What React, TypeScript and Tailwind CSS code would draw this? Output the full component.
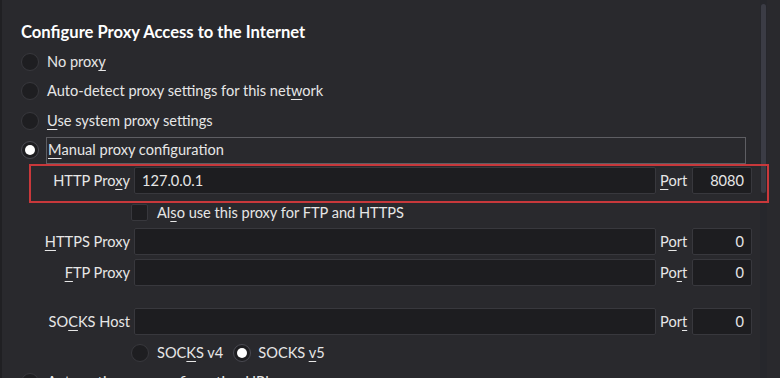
import React from "react";

const font = { fontFamily: "Lato, 'Noto Sans', sans-serif" };

function U({ children }: { children: React.ReactNode }) {
  return <span className="underline underline-offset-[3px] decoration-1">{children}</span>;
}

function Radio({ checked = false }: { checked?: boolean }) {
  return (
    <span
      className={`flex h-[18px] w-[18px] shrink-0 items-center justify-center rounded-full border bg-[#1e1e21] ${
        checked ? "border-[#4a4a52]" : "border-[#38383d]"
      }`}
    >
      {checked && <span className="h-[10px] w-[10px] rounded-full bg-white" />}
    </span>
  );
}

function RadioRow({ children, checked = false, focus = false }: { children: React.ReactNode; checked?: boolean; focus?: boolean }) {
  return (
    <div className="flex h-[29.5px] shrink-0 items-center">
      <Radio checked={checked} />
      {focus ? (
        <div className="ml-[7px] flex h-[27px] w-[700px] items-center border border-[#5e5e63] pl-[1px]">{children}</div>
      ) : (
        <div className="ml-[8px]">{children}</div>
      )}
    </div>
  );
}

function Input({ value = "", right = false, w }: { value?: string; right?: boolean; w: string }) {
  return (
    <div
      className={`flex h-[27px] items-center rounded-[2px] border border-[#38383d] bg-[#1d1d20] px-[7px] ${w} ${
        right ? "justify-end" : "justify-start"
      }`}
    >
      {value}
    </div>
  );
}

function ProxyRow({ label, port, portLabel, value = "" }: { label: React.ReactNode; port: string; portLabel: React.ReactNode; value?: string }) {
  return (
    <div className="flex h-[27px] shrink-0 items-center">
      <div className="w-[109px] text-right">{label}</div>
      <div className="ml-[4px]">
        <Input value={value} w="w-[522px]" />
      </div>
      <div className="w-[36px] pl-[4px]">{portLabel}</div>
      <Input value={port} right w="w-[60px]" />
    </div>
  );
}

export default function App() {
  return (
    <div
      className="relative flex h-[378px] w-[780px] overflow-hidden bg-[#29292d] text-[14.6px] leading-[18px] text-[#e6e6e6]"
      style={font}
    >
      <div className="w-[2px] shrink-0 bg-[#202023]" />
      <div className="flex flex-1 flex-col pl-[19px]">
        <div className="flex h-[47px] shrink-0 items-end pb-[6px] text-[16.6px] font-bold text-white">
          Configure Proxy Access to the Internet
        </div>
        <RadioRow>
          No prox<U>y</U>
        </RadioRow>
        <RadioRow>
          Auto-detect proxy settings for this net<U>w</U>ork
        </RadioRow>
        <RadioRow>
          <U>U</U>se system proxy settings
        </RadioRow>
        <RadioRow checked focus>
          <U>M</U>anual proxy configuration
        </RadioRow>
        <div className="mt-[2px] shrink-0">
          <ProxyRow
            label={
              <>
                HTTP Pro<U>x</U>y
              </>
            }
            value="127.0.0.1"
            portLabel={
              <>
                <U>P</U>ort
              </>
            }
            port="8080"
          />
        </div>
        <div className="mt-[10px] flex h-[17px] shrink-0 items-center pl-[110px]">
          <span className="h-[17px] w-[17px] rounded-[2px] border border-[#38383d] bg-[#1e1e21]" />
          <span className="ml-[9px]">
            Al<U>s</U>o use this proxy for FTP and HTTPS
          </span>
        </div>
        <div className="mt-[7px] shrink-0">
          <ProxyRow
            label={
              <>
                <U>H</U>TTPS Proxy
              </>
            }
            portLabel={
              <>
                P<U>o</U>rt
              </>
            }
            port="0"
          />
        </div>
        <div className="mt-[4px] shrink-0">
          <ProxyRow
            label={
              <>
                <U>F</U>TP Proxy
              </>
            }
            portLabel={
              <>
                Po<U>r</U>t
              </>
            }
            port="0"
          />
        </div>
        <div className="mt-[22px] shrink-0">
          <ProxyRow
            label={
              <>
                SO<U>C</U>KS Host
              </>
            }
            portLabel={
              <>
                Por<U>t</U>
              </>
            }
            port="0"
          />
        </div>
        <div className="mt-[9px] flex h-[18px] shrink-0 items-center pl-[110px]">
          <Radio />
          <span className="ml-[8px]">
            SOC<U>K</U>S v4
          </span>
          <span className="ml-[10px]">
            <Radio checked />
          </span>
          <span className="ml-[7px]">
            SOCKS <U>v</U>5
          </span>
        </div>
        <div className="mt-[11px] flex h-[18px] shrink-0 items-center">
          <Radio />
          <span className="ml-[8px]">Automatic proxy configuration URL</span>
        </div>
      </div>
      <div className="flex w-[20px] shrink-0">
        <div className="flex w-[7px] flex-col bg-[#26272c] pt-[4px]">
          <div className="mx-auto h-[189px] w-[5px] rounded-full bg-[#3b3c45]" />
        </div>
      </div>
      <div className="pointer-events-none absolute left-[29px] top-[164px] h-[39px] w-[740px] border-2 border-[#c8383b]" />
    </div>
  );
}
